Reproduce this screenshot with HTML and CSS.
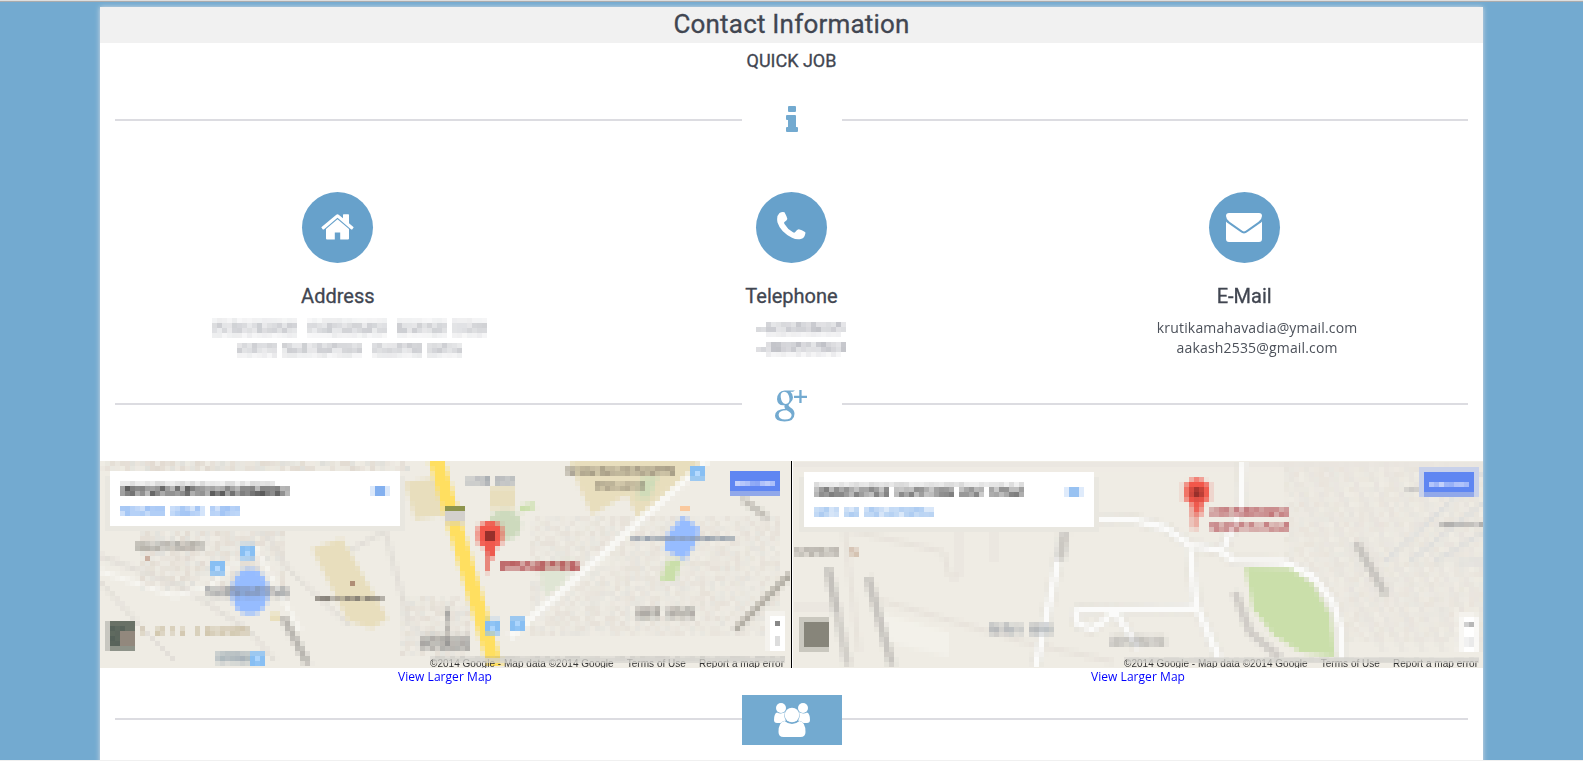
FILE: index.html
```html
<!DOCTYPE html>
<html lang="en">
<head>
<meta charset="utf-8">
<title>Contact Information</title>
<link rel="stylesheet" href="styles.css">
</head>
<body>
<main class="page">
  <h1 class="title">Contact Information</h1>
  <h2 class="subtitle">QUICK JOB</h2>

  <div class="divider divider-info">
    <span class="divider-icon"><svg width="12" height="26" viewBox="0 0 12 26"><path d="M3 0h6q1 0 1 1v4q0 1-1 1H3Q2 6 2 5V1q0-1 1-1zM1 9h8q1 0 1 1v11h1q1 0 1 1v3q0 1-1 1H1q-1 0-1-1v-3q0-1 1-1h1v-7H1q-1 0-1-1v-3q0-1 1-1z"/></svg></span>
  </div>

  <section class="contacts">
    <article class="contact">
      <span class="circle"><svg width="33" height="27" viewBox="0 0 33 27"><path d="M16.500 5.200 28 15v9.500q0 1-1 1h-7.800v-7h-5.400v7H6q-1 0-1-1V15z"/><path d="M.3 13.200 15 .9q1.500-1.200 3 0l4 3.400V1q0-.7.7-.7h4.600q.7 0 .7.700v8.300l4.700 3.900-1.500 2.200q-.5.300-1 0L16.500 3.700 2.800 15.400q-.5.300-1 0z"/></svg></span>
      <h3>Address</h3>
      <canvas class="redacted" data-lines="wide" width="58" height="9"></canvas>
    </article>
    <article class="contact">
      <span class="circle"><svg class="phone" width="29" height="28" viewBox="0 0 29 28"><path d="M2.500 1Q5-.4 7.500.3q2 3.500 2.800 6.500.2 1-2.800 3.200-.8.600 0 2 3 5.300 8.500 8.300 1.200.7 2 0 2.300-3.100 3.800-3 3 .8 6.200 2.800.6.400.3 1.600-1 4.500-3.800 5-4.500 1.500-9.500-1Q3.500 20 .5 10.500-.8 4 2.500 1z"/></svg></span>
      <h3>Telephone</h3>
      <canvas class="redacted shifted" data-lines="phone" width="20" height="9"></canvas>
    </article>
    <article class="contact mail">
      <span class="circle"><svg width="36" height="29" viewBox="0 0 36 29"><path d="M3 0h30q3 0 3 3 0 3-3.500 5.700L21.500 16.500q-2.500 2-3.500 2t-3.500-2L3.500 8.700Q0 6 0 3q0-3 3-3z"/><path d="M0 8.500q.7.900 2 1.800l11.800 8.300q2.600 1.900 4.200 1.900t4.200-1.900L34 10.300q1.300-.9 2-1.800V26q0 3-3 3H3q-3 0-3-3z"/></svg></span>
      <h3>E-Mail</h3>
      <p>krutikamahavadia@ymail.com<br>aakash2535@gmail.com</p>
    </article>
  </section>

  <div class="divider divider-social">
    <span class="divider-icon"><svg width="32" height="32" viewBox="0 0 32 32"><path fill-rule="evenodd" d="M9.500.5H20l-2 1.300h-2.600Q18 4 18 7.500q0 3.200-2.800 5.500-1.700 1.300-1.700 2.200 0 1 2 2.400 4 2.600 4 6.200 0 7.700-10 7.700-9.500 0-9.500-5.700 0-6.500 10.300-7.100-1.500-1.700-.7-3.500-7 .8-7.600-6Q2.500 1 9.500.5zM9 1.800Q5.300 2.200 5.700 7q.8 6.700 5 6.900 4-.3 3.800-5Q13.600 1.600 9 1.800zM11.600 20.200q-7.800.1-8 4.600Q3.800 29.500 10 29.600q6.400-.1 6.600-4.300 0-2.700-5-5.100z"/><path d="M24.300 0h2.300v5.700H32v2.200h-5.400V13h-2.300V7.900H19V5.700h5.300z"/></svg></span>
  </div>

  <section class="maps">
    <figure class="map map-left">
      <div class="view">
        <canvas data-map="left" width="138" height="41"></canvas>
        <div class="credit"><span>©2014 Google - Map data ©2014 Google</span><span>Terms of Use</span><span>Report a map error</span></div>
      </div>
      <figcaption><a href="#">View Larger Map</a></figcaption>
    </figure>
    <figure class="map map-right">
      <div class="view">
        <canvas data-map="right" width="138" height="41"></canvas>
        <div class="credit"><span>©2014 Google - Map data ©2014 Google</span><span>Terms of Use</span><span>Report a map error</span></div>
      </div>
      <figcaption><a href="#">View Larger Map</a></figcaption>
    </figure>
  </section>

  <div class="divider divider-team">
    <span class="divider-icon filled"><svg width="36" height="34" viewBox="0 0 36 34"><circle cx="7" cy="5" r="5"/><circle cx="29" cy="5" r="5"/><path d="M3 9.500q4 2 8-.2-1.500 4.700 1 8.200-3 .2-5.500 2.500H3q-3 0-3-3 0-6.500 3-7.500zM33 9.500q-4 2-8-.2 1.500 4.700-1 8.200 3 .2 5.500 2.500H33q3 0 3-3 0-6.500-3-7.500z"/><circle cx="18" cy="12" r="7.300"/><path d="M10.500 18q3.500 3 7.500 3t7.500-3q6 1 6 11 0 5-5 5h-17q-5 0-5-5 0-10 6-11z"/></svg></span>
  </div>
</main>
<script src="script.js"></script>
</body>
</html>
```
FILE: styles.css
```css
* { box-sizing: border-box; }

body {
  margin: 0;
  height: 761px;
  overflow: hidden;
  padding-top: 5px;
  background: #73aad0;
  border-top: 1px solid #dedede;
  border-bottom: 1px solid #f0f0f0;
  box-shadow: inset 0 1px #a9abad;
  font: 14px/20px "Open Sans", sans-serif;
  color: #414651;
}

h1, h2, h3, p, figure { margin: 0; font-weight: 400; }

.page {
  width: 1383px;
  height: 760px;
  margin: 1px 0 0 100px;
  background: #fff;
  box-shadow: 0 0 5px #d6dce2;
  text-align: center;
}

.title, .subtitle, .contact h3 { -webkit-text-stroke: 0.3px #414651; }

.title {
  height: 36px;
  background: #f1f1f1;
  font: 26px/34px Roboto, sans-serif;
  letter-spacing: 0.2px;
}

.subtitle {
  height: 36px;
  font: 18px/36px Roboto, sans-serif;
}

.divider {
  display: flex;
  align-items: center;
  height: 50px;
  margin: 0 15px;
}

.divider::before,
.divider::after {
  content: "";
  flex: 1;
  height: 2px;
  background: #dcdce1;
}

.divider-icon {
  display: flex;
  align-items: center;
  justify-content: center;
  width: 100px;
  height: 50px;
  fill: #73aad0;
}

.filled { background: #73aad0; fill: #fff; }
.divider-info { margin-top: 16px; }
.divider-info svg { margin-bottom: 2px; }
.divider-social { margin-top: 19px; }
.divider-social svg { margin: 3px 1px 0 0; }
.divider-team { margin-top: 7px; }
.divider-team::before,
.divider-team::after { margin-top: -2px; }

.contacts {
  display: grid;
  grid-template-columns: repeat(3, 1fr);
  height: 215px;
  margin: 0 11px;
  padding-top: 47px;
}

.contact {
  display: flex;
  flex-direction: column;
  align-items: center;
}

.mail { margin: 0 1px 0 -1px; }
.mail p { padding-left: 26px; letter-spacing: 0.17px; color: #4c515a; }

.circle {
  display: flex;
  align-items: center;
  justify-content: center;
  width: 71px;
  height: 71px;
  border-radius: 50%;
  background: #67a1cb;
  fill: #fff;
}

.phone { margin: 0 0 4px 1px; }

.contact h3 {
  height: 55px;
  padding-top: 18px;
  font: 20px/30px Roboto, sans-serif;
}

canvas { display: block; image-rendering: pixelated; }

.redacted { width: 290px; height: 45px; margin: 0 0 0 38px; }
.shifted { width: 100px; margin: 4px 0 0 29px; }

.maps { display: flex; margin-top: 32px; }
.map-left { width: 693px; }
.map-right { width: 690px; }

.view {
  display: grid;
  height: 207px;
  overflow: hidden;
  background: #efece4;
}

.map-left .view { border-right: 1px solid #fff; box-shadow: inset -1px 0 #000; padding-right: 2px; }
.map-right .view { padding: 1px 0 0 1px; }

.view canvas { grid-area: 1 / 1; width: 690px; height: 205px; }

.credit {
  grid-area: 1 / 1;
  align-self: end;
  position: relative;
  display: flex;
  justify-content: flex-end;
  gap: 13px;
  height: 10px;
  padding-right: 6px;
  overflow: hidden;
  font: 10px/11px "Liberation Sans", sans-serif;
  letter-spacing: 0.03px;
  color: #333;
  z-index: 1;
  white-space: nowrap;
}

/* Frosted band across the upper part of the attribution line */
.credit::before {
  content: "";
  position: absolute;
  inset: 0 5px 5px auto;
  width: 352px;
  background: rgba(215, 213, 208, 0.75);
}

.map-left figcaption { padding-right: 3px; }
figcaption { font-size: 12px; line-height: 18px; padding-bottom: 2px; }
figcaption a { color: #00f; text-decoration: none; letter-spacing: 0.05px; }
```
FILE: script.js
```js
// Low-resolution tiles: one canvas pixel covers a 5px block on the page.
const CELL = 5;
let seed = 7;
const rand = () => (seed = (seed * 16807) % 2147483647) / 2147483647;

function painter(canvas) {
  const c = canvas.getContext('2d');
  c.scale(1 / CELL, 1 / CELL);
  c.lineJoin = 'round';
  return {
    rect(x, y, w, h, color) { c.fillStyle = color; c.fillRect(x, y, w, h); },
    poly(points, color) {
      c.fillStyle = color;
      c.beginPath();
      points.forEach(p => c.lineTo(p[0], p[1]));
      c.fill();
    },
    line(points, width, color) {
      c.strokeStyle = color;
      c.lineWidth = width;
      c.beginPath();
      points.forEach(p => c.lineTo(p[0], p[1]));
      c.stroke();
    },
    oval(x, y, rx, ry, color) {
      c.fillStyle = color;
      c.beginPath();
      c.ellipse(x, y, rx, ry, 0, 0, 7);
      c.fill();
    },
    label(x, y, w, h, color, strength = 0.6) {
      c.fillStyle = color;
      for (let j = 0; j < h; j += CELL) {
        for (let i = 0; i < w; i += CELL) {
          c.globalAlpha = strength * (0.45 + 0.65 * rand());
          c.fillRect(x + i, y + j, CELL, CELL);
        }
      }
      c.globalAlpha = 1;
    },
    grain(x, y, w, h, amount) {
      for (let j = 0; j < h; j += CELL) {
        for (let i = 0; i < w; i += CELL) {
          c.globalAlpha = amount * rand();
          c.fillStyle = rand() > 0.4 ? '#c9b9ae' : '#c4c8c8';
          c.fillRect(x + i, y + j, CELL, CELL);
        }
      }
      c.globalAlpha = 1;
    }
  };
}

function pin(p, x, y) {
  p.rect(x - 15, y - 10, 30, 20, 'rgba(235,90,75,.25)');
  p.oval(x, y, 12, 14, '#f2574a');
  p.rect(x - 5, y + 8, 10, 15, '#ee5a4e');
  p.rect(x - 5, y + 18, 5, 19, '#e8877b');
  p.rect(x - 5, y - 4, 10, 10, '#98302b');
}

function card(p, x, y) {
  p.rect(x - 5, y + 5, 300, 55, '#e9e7e0');
  p.rect(x, y, 290, 55, '#fff');
}

function signIn(p) {
  p.rect(630, 10, 50, 20, '#5f86f2');
  p.rect(630, 30, 50, 5, '#91a8ea');
  p.label(635, 20, 40, 5, '#d5defd', 0.8);
}

function controls(p, x, y) {
  p.rect(x - 5, y - 5, 20, 40, '#f4f2ed');
  p.rect(x, y, 15, 35, '#fff');
  p.rect(x + 5, y + 5, 5, 5, '#888');
  p.rect(x + 5, y + 20, 5, 10, '#ddd');
}

const maps = {
  left(p) {
    p.rect(0, 0, 690, 205, '#efece4');
    p.grain(0, 0, 310, 10, 0.35);
    p.grain(40, 65, 145, 65, 0.3);
    p.grain(300, 135, 70, 60, 0.25);
    p.grain(430, 55, 250, 120, 0.2);
    [[[0, 95], [80, 125], [150, 170], [175, 200]], [[0, 120], [40, 165], [75, 200]], [[160, 65], [190, 110], [250, 165]], [[240, 95], [285, 70], [310, 165]]]
      .forEach(r => p.line(r, 4, '#e0dcd5'));
    p.line([[0, 110], [75, 135], [110, 125], [155, 85]], 5, '#f6f5f0');
    p.line([[155, 85], [200, 170]], 5, '#f8f7f2');
    p.poly([[305, 21], [338, 16], [345, 54], [315, 59]], '#e8debd');
    p.poly([[212, 87], [242, 77], [288, 157], [272, 167], [248, 160]], '#e8debd');
    p.poly([[470, 0], [607, 0], [583, 21], [537, 56], [527, 34], [492, 54], [480, 27]], '#e8debd');
    p.rect(390, 26, 25, 22, '#e8debd');
    p.poly([[540, 18], [558, 15], [550, 38], [537, 38]], '#d0dcb9');
    p.oval(405, 64, 16, 15, '#cddabd');
    p.line([[420, 48], [435, 44]], 6, '#cadfaa');
    p.poly([[438, 103], [472, 97], [465, 122], [445, 135]], '#dfe5d4');
    p.line([[336, -2], [396, 208]], 15, '#ffdf60');
    p.rect(345, 45, 20, 5, '#8d944d');
    p.rect(345, 50, 20, 12, '#d3d0cc');
    p.line([[609, -2], [410, 176]], 7, '#fafaf7');
    p.oval(150, 131, 19, 23, '#96bcff');
    p.poly([[583, 55], [600, 67], [595, 84], [585, 99], [564, 89], [567, 74]], '#96bcff');
    p.poly([[568, 99], [582, 99], [575, 120], [560, 120]], '#cadfaa');
    [[140, 84], [110, 100], [150, 191], [590, 5], [385, 159], [410, 156]].forEach(b => {
      p.rect(b[0], b[1], 15, 14, '#88bff3');
      p.rect(b[0] + 5, b[1] + 5, 5, 5, '#b5daff');
    });
    p.rect(580, 45, 10, 5, '#fac99e');
    p.rect(170, 152, 10, 8, '#e9dfbc');
    p.line([[183, 156], [208, 203]], 7, '#b9b6b0');
    p.line([[642, 37], [668, 57]], 6, '#c2beb7');
    p.line([[690, 113], [635, 169]], 6, '#b0aca2');
    p.label(35, 80, 70, 10, '#8c8982', 0.5);
    p.label(105, 126, 85, 9, '#777c83', 0.6);
    p.label(215, 135, 70, 5, '#77726a', 0.8);
    p.rect(250, 120, 5, 5, '#b08e75');
    p.rect(45, 95, 5, 5, '#cbb0a1');
    [[40, 5], [55, 10], [70, 5], [80, 5], [95, 5], [105, 45]].forEach(w => p.label(w[0], 165, w[1], 10, '#c0b18f', 0.55));
    p.label(115, 192, 35, 8, '#637d91', 0.7);
    p.label(365, 15, 25, 10, '#788290', 0.55);
    p.label(395, 15, 20, 10, '#788290', 0.5);
    p.label(465, 5, 110, 10, '#89806d', 0.6);
    p.label(495, 20, 50, 8, '#89806d', 0.5);
    p.label(530, 75, 105, 5, '#828fa0', 0.7);
    p.label(400, 100, 80, 10, '#b04448', 0.75);
    p.label(535, 147, 25, 8, '#807c78', 0.7);
    p.label(565, 147, 30, 8, '#807c78', 0.65);
    p.label(320, 174, 48, 11, '#777', 0.6);
    p.label(345, 145, 5, 40, '#777', 0.5);
    p.rect(5, 160, 30, 30, '#c8c7c0');
    p.rect(10, 160, 25, 28, '#697166');
    p.label(10, 165, 15, 20, '#4b5a52', 0.6);
    p.rect(20, 170, 15, 15, '#92887d');
    pin(p, 390, 74);
    card(p, 10, 10);
    p.label(20, 25, 170, 10, '#4d4d4d', 0.85);
    p.label(20, 20, 155, 5, '#777', 0.25);
    [[20, 45], [70, 35], [110, 30]].forEach(w => p.label(w[0], 45, w[1], 10, '#78aaf0', 0.65));
    p.rect(270, 25, 20, 10, '#dbe8fa');
    p.rect(275, 25, 10, 10, '#83b0ef');
    signIn(p);
    controls(p, 670, 155);
    p.label(330, 195, 355, 5, '#999', 0.3);
  },
  right(p) {
    p.rect(0, 0, 690, 205, '#efece4');
    p.grain(490, 0, 200, 180, 0.14);
    for (let i = 0; i < 9; i++) p.line([[490 + i * 20, 0], [590 + i * 20, 190]], 4, '#e7e3de');
    for (let i = 0; i < 4; i++) p.line([[590 + i * 25, 100], [690, 10 + i * 30]], 5, '#dfdfdd');
    p.line([[0, 3], [690, 3]], 4, '#e8e5de');
    [[[40, 65], [150, 90], [155, 115], [165, 115], [165, 65]], [[75, 135], [230, 180], [320, 200]], [[200, 65], [200, 100]], [[0, 145], [35, 145]], [[50, 65], [65, 190]]]
      .forEach(r => p.line(r, 4, '#e6e1d9'));
    p.poly([[85, 150], [155, 170], [155, 195], [95, 180]], '#f3f1ea');
    const avenue = [[290, 57], [341, 58], [372, 66], [396, 83], [426, 88], [439, 98], [489, 100], [519, 115], [539, 140], [547, 167], [547, 198]];
    const branches = [
      [[271, 65], [242, 205]],
      [[449, 0], [447, 45], [430, 85]],
      [[396, 86], [402, 143], [426, 198]],
      [[281, 148], [402, 146]],
      [[281, 148], [284, 162], [298, 167], [312, 158], [320, 148], [345, 187]]
    ];
    branches.concat([avenue]).forEach(r => p.line(r, 11, '#e2dfd7'));
    branches.concat([avenue]).forEach(r => p.line(r, 7, '#fbfbfa'));
    p.poly([[451, 105], [496, 106], [519, 123], [536, 153], [541, 195], [506, 190], [479, 173], [459, 146]], '#cadfaa');
    p.line([[441, 130], [456, 170], [486, 196]], 8, '#d0ccc7');
    p.line([[562, 81], [592, 133]], 8, '#c7c4bf');
    p.line([[34, 106], [43, 150]], 8, '#c4c1bc');
    p.line([[43, 150], [54, 203]], 8, '#d2cfc9');
    p.line([[74, 115], [98, 203]], 8, '#c8c5c0');
    p.line([[271, 70], [266, 98]], 9, '#cbc8c2');
    p.label(0, 85, 45, 9, '#908b84', 0.5);
    p.label(55, 85, 10, 9, '#c5a993', 0.6);
    p.label(195, 162, 35, 9, '#848c98', 0.6);
    p.label(235, 162, 25, 9, '#848c98', 0.6);
    p.label(316, 174, 53, 10, '#888', 0.5);
    p.label(610, 25, 20, 5, '#aaa', 0.6);
    p.label(645, 60, 43, 5, '#999', 0.65);
    p.label(415, 45, 80, 10, '#b04a51', 0.65);
    p.label(415, 60, 80, 10, '#b04a51', 0.6);
    p.rect(5, 155, 30, 35, '#cac8bf');
    p.rect(10, 160, 25, 25, '#87857a');
    pin(p, 403, 30);
    card(p, 10, 10);
    [[20, 75], [100, 60], [165, 25], [195, 35]].forEach(w => p.label(w[0], 25, w[1], 10, '#696969', 0.78));
    p.label(20, 20, 210, 5, '#777', 0.25);
    [[20, 25], [50, 15], [70, 70]].forEach(w => p.label(w[0], 45, w[1], 10, '#8db8ec', 0.65));
    p.rect(270, 25, 20, 10, '#dfebfb');
    p.rect(275, 25, 10, 10, '#98c2f2');
    p.rect(625, 5, 60, 30, '#c8d1ea');
    signIn(p);
    controls(p, 668, 155);
    p.label(330, 195, 355, 5, '#bbb', 0.3);
  }
};

document.querySelectorAll('[data-map]').forEach(el => maps[el.dataset.map](painter(el)));

document.querySelectorAll('[data-lines]').forEach(el => {
  const p = painter(el);
  if (el.dataset.lines === 'wide') {
    [[0, 85], [95, 80], [185, 50], [240, 35]].forEach(w => {
      p.label(w[0], 5, w[1], 10, '#8d9099', 0.4);
      p.label(w[0], 0, w[1], 5, '#8d9099', 0.15);
      p.label(w[0], 15, w[1], 5, '#8d9099', 0.15);
    });
    [[25, 40], [70, 80], [160, 50], [215, 35]].forEach(w => {
      p.label(w[0], 25, w[1], 10, '#8d9099', 0.4);
      p.label(w[0], 35, w[1], 5, '#8d9099', 0.18);
    });
  } else {
    [0, 20].forEach(y => {
      p.label(0, y + 5, 10, 5, '#80828e', 0.3);
      p.label(10, y, 80, 10, '#80828e', 0.45);
      p.label(10, y + 10, 75, 5, '#80828e', 0.15);
    });
  }
});
```
